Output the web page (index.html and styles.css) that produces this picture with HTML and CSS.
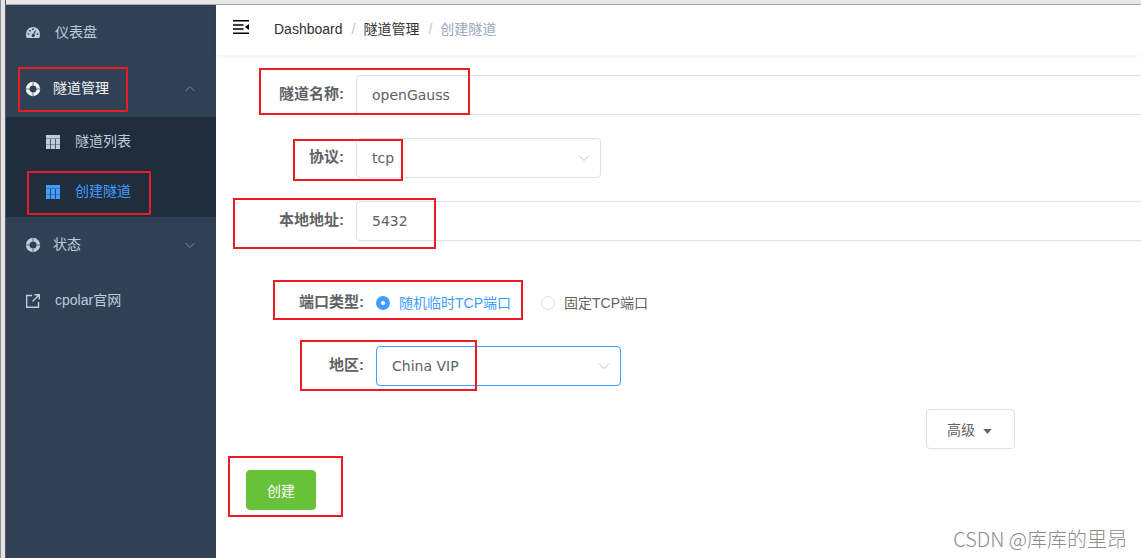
FILE: index.html
```html
<!DOCTYPE html>
<html lang="zh-CN">
<head>
  <meta charset="UTF-8">
  <meta name="viewport" content="width=device-width, initial-scale=1">
  <title>创建隧道</title>
  <link rel="stylesheet" href="styles.css">
</head>
<body>
  <div class="app">
    <!-- Sidebar -->
    <nav class="sidebar">
      <a class="menu-item" href="#">
        <svg class="icon" viewBox="0 0 14 14"><path fill="currentColor" fill-rule="evenodd" d="M7 1a7 7 0 0 1 7 7c0 1.500-.2 2.900-.8 4H.8A8 8 0 0 1 0 8a7 7 0 0 1 7-7zM1.700 7.200v1.600h1.600V7.200zM3.200 3.900v1.600h1.600V3.900zM6.200 2.400v1.600h1.600V2.400zM10.700 7.200v1.600h1.600V7.200zM9 4.200 7.300 7.800a1.600 1.600 0 1 0 1 .400l1.700-3.600z"/></svg>
        <span class="menu-text wide">仪表盘</span>
      </a>
      <a class="menu-item open" href="#">
        <svg class="icon" viewBox="0 0 14 14"><circle cx="7" cy="7" r="5.400" fill="none" stroke="currentColor" stroke-width="3.600"/><path class="ring-gap" d="M7 0v3.500M7 10.500V14M0 7h3.500M10.500 7H14"/></svg>
        <span class="menu-text">隧道管理</span>
        <svg class="arrow" viewBox="0 0 12 12"><path d="M1.500 8 6 3.500 10.500 8"/></svg>
      </a>
      <div class="submenu">
        <a class="sub-item" href="#">
          <svg class="icon" viewBox="0 0 14 14"><path fill="currentColor" d="M0 0h14v14H0z"/><path class="grid-row" d="M0 3.500h14M0 9.500h14"/><path class="grid-col" d="M4.500 4v10M9.500 4v10"/></svg>
          <span class="menu-text wide">隧道列表</span>
        </a>
        <a class="sub-item active" href="#">
          <svg class="icon" viewBox="0 0 14 14"><path fill="currentColor" d="M0 0h14v14H0z"/><path class="grid-row" d="M0 3.500h14M0 9.500h14"/><path class="grid-col" d="M4.500 4v10M9.500 4v10"/></svg>
          <span class="menu-text wide">创建隧道</span>
        </a>
      </div>
      <a class="menu-item" href="#">
        <svg class="icon" viewBox="0 0 14 14"><circle cx="7" cy="7" r="5.400" fill="none" stroke="currentColor" stroke-width="3.600"/><path class="ring-gap" d="M7 0v3.500M7 10.500V14M0 7h3.500M10.500 7H14"/></svg>
        <span class="menu-text">状态</span>
        <svg class="arrow" viewBox="0 0 12 12"><path d="M1.500 4 6 8.500 10.500 4"/></svg>
      </a>
      <a class="menu-item" href="#">
        <svg class="icon" viewBox="0 0 14 14"><path fill="none" stroke="currentColor" stroke-width="1.400" d="M6 1.500H.7v11.800h11.800V8M6.500 7.500l6.500-6.500M8.500.7h4.800v4.800"/></svg>
        <span class="menu-text wide">cpolar官网</span>
      </a>
    </nav>

    <div class="main">
      <!-- Top bar -->
      <header class="navbar">
        <button class="hamburger" type="button" aria-label="折叠菜单">
          <svg viewBox="0 0 16 14"><path stroke="#000" stroke-width="1.500" d="M0 .8h16M0 5h10.500M0 9h10.500M0 13.200h16"/><path d="M16 4v6l-4-3z"/></svg>
        </button>
        <div class="breadcrumb">
          <a href="#">Dashboard</a>
          <span class="separator">/</span>
          <a href="#">隧道管理</a>
          <span class="separator">/</span>
          <span class="current">创建隧道</span>
        </div>
      </header>

      <!-- Tunnel form -->
      <form class="tunnel-form">
        <div class="form-item">
          <label class="form-label" for="name">隧道名称:</label>
          <input class="text-input" id="name" type="text" value="openGauss">
        </div>
        <div class="form-item">
          <label class="form-label" for="protocol">协议:</label>
          <div class="select-box">
            <select id="protocol"><option>tcp</option></select>
            <svg class="caret" viewBox="0 0 12 12"><path d="M1 3.500l5 5 5-5"/></svg>
          </div>
        </div>
        <div class="form-item">
          <label class="form-label" for="address">本地地址:</label>
          <input class="text-input" id="address" type="text" value="5432">
        </div>

        <div class="sub-form">
          <div class="form-item">
            <span class="form-label" id="port-type">端口类型:</span>
            <div class="radio-group" role="radiogroup" aria-labelledby="port-type">
              <label class="radio"><input type="radio" name="port" checked><span>随机临时TCP端口</span></label>
              <label class="radio"><input type="radio" name="port"><span>固定TCP端口</span></label>
            </div>
          </div>
          <div class="form-item">
            <label class="form-label" for="region">地区:</label>
            <div class="select-box focus">
              <select id="region"><option>China VIP</option></select>
              <svg class="caret" viewBox="0 0 12 12"><path d="M1 3.500l5 5 5-5"/></svg>
            </div>
          </div>
        </div>

        <div class="more">
          <button class="btn" type="button">高级
            <svg viewBox="0 0 10 6"><path fill="currentColor" d="M0 0h10L5 6z"/></svg>
          </button>
        </div>
        <button class="btn btn-success" type="button">创建</button>
      </form>
    </div>
  </div>

  <!-- Red highlight boxes -->
  <div class="mark mark-manage"></div>
  <div class="mark mark-create"></div>
  <div class="mark mark-name"></div>
  <div class="mark mark-protocol"></div>
  <div class="mark mark-address"></div>
  <div class="mark mark-port"></div>
  <div class="mark mark-region"></div>
  <div class="mark mark-submit"></div>

  <div class="watermark">CSDN @库库的里昂</div>
</body>
</html>
```
FILE: styles.css
```css
* {
  box-sizing: border-box;
}
body {
  margin: 0;
  position: relative;
  overflow: hidden;
  background: #fff;
  color: #606266;
  font-family: "Liberation Sans", "Noto Sans CJK SC", sans-serif;
  font-size: 14px;
}
a {
  color: inherit;
  text-decoration: none;
}
/* window frame: grey edge on the top and left */
.app {
  display: flex;
  min-height: 100vh;
  padding: 5px 0 0 6px;
  background:
    linear-gradient(90deg, #8c8c94 1px, #e4e4e6 1px, #e4e4e6 5px, #55575c 5px) left / 6px 100% no-repeat,
    linear-gradient(#e8e8e6 4px, #aaa 4px) top / 100% 5px no-repeat;
}

/* Sidebar */
.sidebar {
  flex: none;
  width: 210px;
  background: #304156;
  color: #bfcbd9;
}
.menu-item,
.sub-item {
  display: flex;
  align-items: center;
  height: 56px;
  padding: 0 20px;
}
.sub-item {
  height: 50px;
  padding-left: 40px;
}
.submenu {
  background: #1f2d3d;
}
.open {
  color: #f4f4f5;
}
.active {
  color: #409eff;
}
.icon {
  flex: none;
  width: 14px;
  height: 14px;
  overflow: visible;
}
.ring-gap {
  stroke: #304156;
  stroke-opacity: 0.7;
}
.grid-row,
.grid-col {
  fill: none;
  stroke: #1f2d3d;
  stroke-opacity: 0.35;
}
.grid-col {
  stroke-opacity: 0.7;
}
.menu-text {
  margin-left: 13px;
  line-height: 20px;
  padding-bottom: 2px;
}
.menu-text.wide {
  margin-left: 15px;
}
.arrow,
.caret {
  width: 12px;
  height: 12px;
  fill: none;
  stroke: #909399;
}
.arrow {
  margin-left: auto;
  stroke: #7c8592;
}

/* Top bar */
.main {
  flex: 1;
  min-width: 0;
}
.navbar {
  display: flex;
  align-items: center;
  height: 50px;
  padding: 0 17px;
  box-shadow: 0 1px 4px rgba(0, 21, 41, 0.08);
}
.hamburger {
  padding: 0;
  border: 0;
  background: none;
  margin-bottom: 6px;
}
.hamburger svg {
  display: block;
  width: 16px;
  height: 14px;
}
.breadcrumb {
  display: flex;
  margin-left: 25px;
  line-height: 20px;
  color: #303133;
  padding-bottom: 2px;
}
.separator {
  margin: 0 8px 0 9px;
  color: #c0c4cc;
}
.current {
  color: #97a8be;
}

/* Form */
.tunnel-form {
  padding: 20px 0 20px 20px;
}
.form-item {
  display: flex;
  align-items: center;
  height: 40px;
  margin-bottom: 23px;
}
.form-label {
  flex: none;
  width: 120px;
  padding: 0 12px 2px 0;
  text-align: right;
  font-size: 15px;
  font-weight: 700;
  line-height: 20px;
}
.text-input,
.select-box select {
  height: 40px;
  padding: 0 15px;
  border: 1px solid #dcdfe6;
  border-radius: 4px;
  background: #fff;
  color: #606266;
  font-family: "DejaVu Sans", sans-serif;
  font-size: 14px;
  outline: none;
}
/* the text boxes run on past the window edge */
.text-input {
  flex: 1;
  margin-right: -20px;
}
.select-box {
  position: relative;
  width: 245px;
}
.select-box select {
  appearance: none;
  display: block;
  width: 100%;
}
.select-box.focus select {
  border-color: #409eff;
}
.caret {
  position: absolute;
  right: 11px;
  top: 14px;
  stroke: #c0c4cc;
}
.sub-form {
  padding: 19px 0 0 20px;
}
.radio-group {
  display: flex;
  gap: 30px;
}
.radio {
  display: flex;
  align-items: center;
  gap: 9px;
  line-height: 20px;
}
.radio input {
  appearance: none;
  width: 14px;
  height: 14px;
  margin: 0;
  border: 1px solid #dcdfe6;
  border-radius: 50%;
  background: #fff;
}
.radio input:checked {
  border: 5px solid #409eff;
}
.radio input:checked + span {
  color: #409eff;
}
.more {
  display: flex;
  justify-content: flex-end;
  padding-right: 126px;
  margin-bottom: 21px;
}
.btn {
  height: 40px;
  padding: 0 20px;
  border: 1px solid #dcdfe6;
  border-radius: 4px;
  background: #fff;
  color: #606266;
  font-family: inherit;
  font-size: 14px;
}
.btn svg {
  width: 9px;
  height: 5px;
  margin: 0 2px 1px 4px;
}
.btn-success {
  width: 70px;
  margin-left: 10px;
  border-color: #67c23a;
  background: #67c23a;
  color: #fff;
}

/* Red highlight boxes */
.mark {
  position: absolute;
  border: 2px solid #ed1c24;
  pointer-events: none;
}
.mark-manage {
  left: 18px;
  top: 67px;
  width: 110px;
  height: 45px;
}
.mark-create {
  left: 27px;
  top: 171px;
  width: 124px;
  height: 44px;
}
.mark-name {
  left: 259px;
  top: 68px;
  width: 211px;
  height: 47px;
}
.mark-protocol {
  left: 293px;
  top: 139px;
  width: 110px;
  height: 42px;
}
.mark-address {
  left: 233px;
  top: 198px;
  width: 203px;
  height: 51px;
}
.mark-port {
  left: 273px;
  top: 280px;
  width: 250px;
  height: 40px;
}
.mark-region {
  left: 300px;
  top: 340px;
  width: 177px;
  height: 51px;
}
.mark-submit {
  left: 228px;
  top: 456px;
  width: 115px;
  height: 61px;
}

.watermark {
  position: absolute;
  right: 14px;
  bottom: 4px;
  color: #8c8c8c;
  font-family: "Noto Sans CJK SC", sans-serif;
  font-size: 20px;
  font-weight: 300;
  line-height: 30px;
}
```
